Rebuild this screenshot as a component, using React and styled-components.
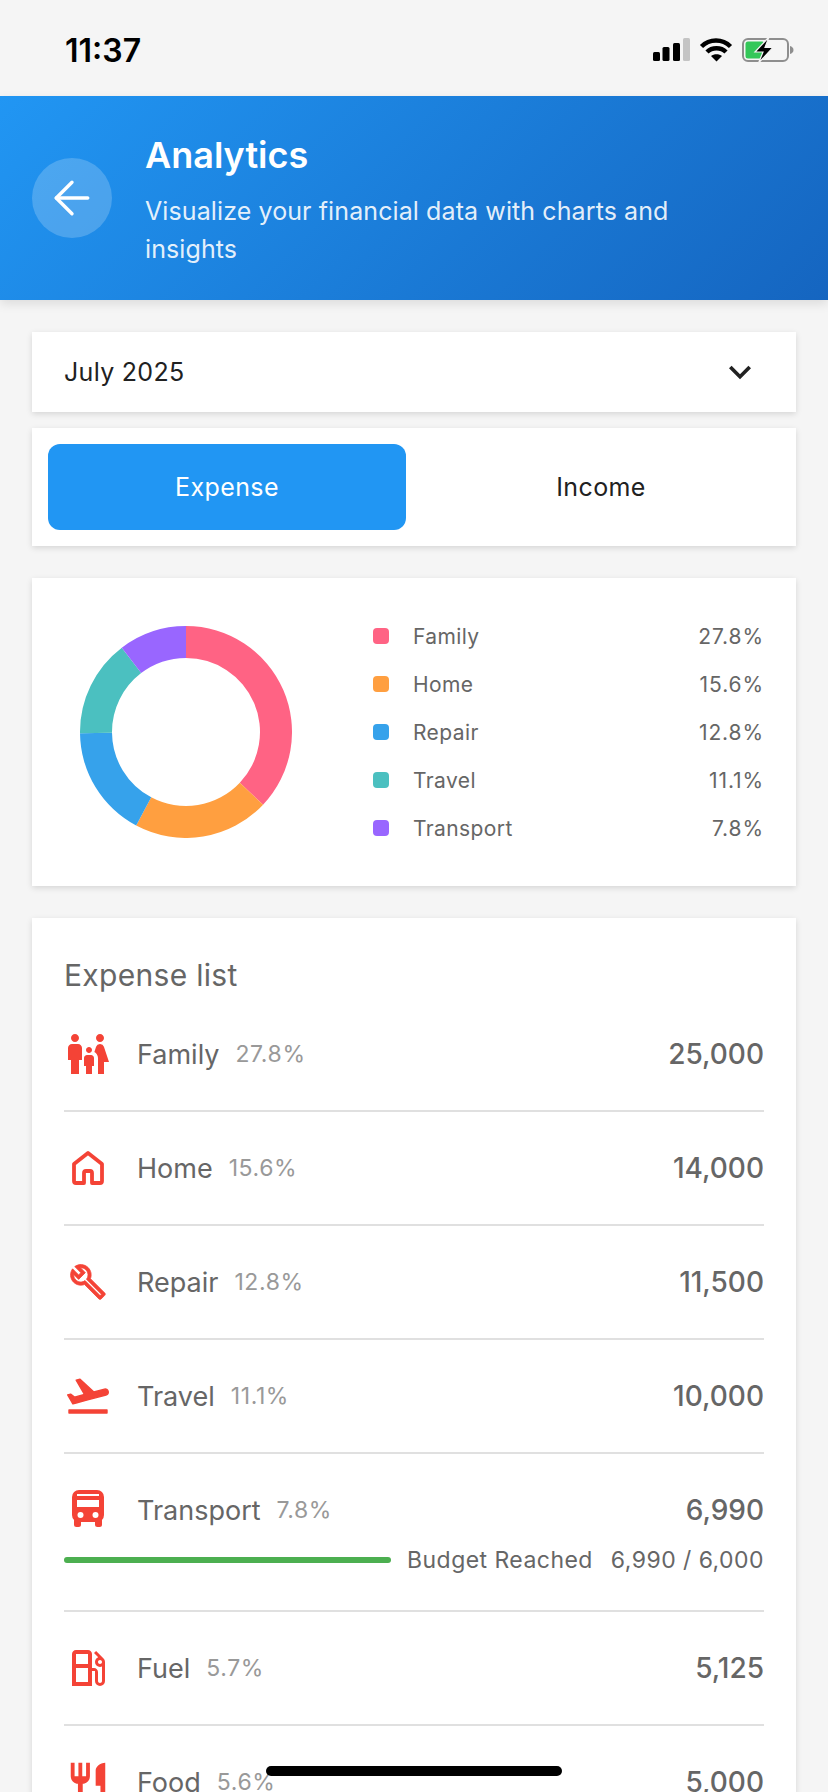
import styled, { createGlobalStyle } from "styled-components";
import { ArrowLeft } from "lucide-react";
import {
  MdFamilyRestroom,
  MdOutlineLocalGasStation,
  MdRestaurant,
  MdKeyboardArrowDown,
} from "react-icons/md";

const GlobalStyle = createGlobalStyle`
  html, body {
    margin: 0;
    padding: 0;
    background: #f5f5f5;
    font-family: Inter, "Liberation Sans", sans-serif;
  }
  * { box-sizing: border-box; }
`;

const Screen = styled.div`
  position: relative;
  width: 828px;
  height: 1792px;
  overflow: hidden;
  background: #f5f5f5;
`;

const StatusBar = styled.div`
  height: 96px;
  padding: 4px 32px 0 65px;
  display: flex;
  align-items: center;
  justify-content: space-between;
`;

const Clock = styled.span`
  font-size: 32px;
  font-weight: 600;
  color: #000;
`;

const Header = styled.header`
  height: 204px;
  padding: 5px 32px 0;
  display: flex;
  align-items: center;
  gap: 33px;
  background: linear-gradient(135deg, #2196f3, #1565c0);
  box-shadow: 0 4px 10px rgba(0, 0, 0, 0.1);
`;

const BackButton = styled.div`
  width: 80px;
  height: 80px;
  flex: none;
  margin-top: -5px;
  border-radius: 50%;
  display: flex;
  align-items: center;
  justify-content: center;
  color: #fff;
  background: rgba(255, 255, 255, 0.2);
`;

const HeaderText = styled.div`
  width: 560px;
`;

const Title = styled.h1`
  margin: 0 0 15px;
  font-size: 36px;
  line-height: 44px;
  font-weight: 600;
  color: #fff;
`;

const Subtitle = styled.p`
  margin: 0;
  font-size: 25px;
  line-height: 38px;
  letter-spacing: 0.1px;
  color: rgba(255, 255, 255, 0.9);
`;

const Content = styled.main`
  padding: 32px 32px 0;
  display: flex;
  flex-direction: column;
`;

const Card = styled.section`
  background: #fff;
  box-shadow: 0 2px 6px rgba(0, 0, 0, 0.13);
  margin-bottom: ${(props) => props.$gap || 32}px;
`;

const MonthSelect = styled(Card)`
  height: 80px;
  padding: 0 34px 0 32px;
  display: flex;
  align-items: center;
  justify-content: space-between;
  font-size: 25px;
  letter-spacing: 0.3px;
  color: #212121;
`;

const Tabs = styled(Card)`
  height: 118px;
  padding: 16px;
  display: grid;
  grid-template-columns: 1fr 1fr;
  gap: 16px;
`;

const Tab = styled.div`
  display: flex;
  align-items: center;
  justify-content: center;
  border-radius: 12px;
  font-size: 25px;
  letter-spacing: 0.4px;
  color: ${(props) => (props.$active ? "#fff" : "#212121")};
  background: ${(props) => (props.$active ? "#2196f3" : "transparent")};
`;

const ChartCard = styled(Card)`
  height: 308px;
  padding: 0 32px 0 48px;
  display: flex;
  align-items: center;
  gap: 81px;
`;

const Legend = styled.ul`
  flex: 1;
  margin: 0;
  padding: 0;
  list-style: none;
  display: flex;
  flex-direction: column;
  gap: 22px;
`;

const LegendRow = styled.li`
  height: 26px;
  display: flex;
  align-items: center;
  font-size: 21px;
  letter-spacing: 0.4px;
  color: #666;
`;

const LegendDot = styled.span`
  width: 16px;
  height: 16px;
  margin-right: 24px;
  border-radius: 4px;
  background: ${(props) => props.$color};
`;

const LegendValue = styled.span`
  margin-left: auto;
  letter-spacing: 0.9px;
`;

const ListCard = styled(Card)`
  padding: 36px 32px 0;
`;

const ListTitle = styled.h2`
  margin: 0 0 2px;
  font-size: 30px;
  line-height: 42px;
  font-weight: 400;
  letter-spacing: 0.3px;
  color: #666;
`;

const Row = styled.div`
  border-bottom: 2px solid #e0e0e0;
  padding: ${(props) => (props.$budget ? "28px 0 36px" : "0")};
  display: flex;
  flex-direction: column;
  justify-content: center;
  min-height: 114px;
`;

const RowMain = styled.div`
  display: flex;
  align-items: center;
  height: 56px;
`;

const IconSlot = styled.div`
  width: 73px;
  flex: none;
  display: flex;
  align-items: center;
  color: #f44336;
`;

const IconBox = styled.div`
  width: 48px;
  height: 56px;
  display: flex;
  align-items: center;
  justify-content: center;
`;

const RowName = styled.span`
  font-size: 27px;
  color: #666;
`;

const RowPercent = styled.span`
  margin-left: 16px;
  font-size: 23px;
  letter-spacing: 0.6px;
  color: #999;
`;

const RowAmount = styled.span`
  margin-left: auto;
  font-size: 28px;
  font-weight: 500;
  color: #666;
`;

const BudgetRow = styled.div`
  margin-top: 8px;
  height: 28px;
  display: flex;
  align-items: center;
  gap: 16px;
  font-size: 23px;
  letter-spacing: 0.45px;
  color: #666;
`;

const BudgetBar = styled.div`
  flex: 1;
  height: 6px;
  border-radius: 3px;
  background: #4caf50;
`;

const BudgetNote = styled.span`
  margin-right: 2px;
`;

const HomeIndicator = styled.div`
  position: absolute;
  left: 266px;
  bottom: 16px;
  width: 296px;
  height: 10px;
  border-radius: 5px;
  background: #000;
`;

const StatusIcons = () => (
  <svg width="143" height="28" viewBox="0 0 143 28">
    <rect x="0" y="16" width="7" height="9" rx="1.500" fill="#000" />
    <rect x="9.500" y="11" width="7" height="14" rx="1.500" fill="#000" />
    <rect x="20" y="7" width="7" height="18" rx="1.500" fill="#000" />
    <rect x="30" y="2" width="7" height="23" rx="1.500" fill="#c4c4c4" />
    <path d="M48.500 10.500C56.500 2.500 69.500 2.500 77.500 10.500" fill="none" stroke="#000" strokeWidth="4.500" />
    <path d="M54 16C59 11 68 11 73 16" fill="none" stroke="#000" strokeWidth="4.500" />
    <path d="M58 20L63.500 25.500L69 20C66 17.500 61 17.500 58 20Z" fill="#000" />
    <rect x="90" y="3" width="45" height="22" rx="5" fill="none" stroke="#8e8e8e" strokeWidth="2" />
    <rect x="92.500" y="5.500" width="19" height="17" rx="2.500" fill="#34c759" />
    <path d="M137 10c2 .6 3.500 2 3.500 4s-1.500 3.400-3.500 4z" fill="#8e8e8e" />
    <path d="M116 1L102 16H110L105.500 27L120 11.500H112Z" fill="#000" stroke="#f5f5f5" strokeWidth="1.200" />
  </svg>
);

// 도넛 차트 조각
const slices = [
  { color: "#ff6384", value: 25000 },
  { color: "#ff9f40", value: 14000 },
  { color: "#36a2eb", value: 11500 },
  { color: "#4bc0c0", value: 10000 },
  { color: "#9966ff", value: 6990 },
];

const polar = (radius, angle) => {
  const rad = (angle * Math.PI) / 180;
  return [106 + radius * Math.sin(rad), 106 - radius * Math.cos(rad)];
};

const slicePath = (from, to) => {
  const [x1, y1] = polar(106, from);
  const [x2, y2] = polar(106, to);
  const [x3, y3] = polar(74, to);
  const [x4, y4] = polar(74, from);
  const large = to - from > 180 ? 1 : 0;
  return `M${x1} ${y1}A106 106 0 ${large} 1 ${x2} ${y2}L${x3} ${y3}A74 74 0 ${large} 0 ${x4} ${y4}Z`;
};

const Donut = () => {
  const total = slices.reduce((sum, s) => sum + s.value, 0);
  let angle = 0;
  return (
    <svg width="212" height="212" viewBox="0 0 212 212" style={{ flex: "none" }}>
      {slices.map((s) => {
        const from = angle;
        angle += (s.value / total) * 360;
        return <path key={s.color} d={slicePath(from, angle)} fill={s.color} />;
      })}
    </svg>
  );
};

const HomeIcon = () => (
  <svg width="48" height="48" viewBox="0 0 48 48" fill="none" stroke="currentColor" strokeWidth="3.800" strokeLinejoin="round">
    <path d="M10 20L24 9L38 20V37a2 2 0 0 1-2 2H28V29a2 2 0 0 0-2-2H22a2 2 0 0 0-2 2V39H12a2 2 0 0 1-2-2Z" />
  </svg>
);

const BusIcon = () => (
  <svg width="48" height="56" viewBox="0 0 48 56">
    <rect x="8" y="8" width="32" height="32" rx="7" fill="currentColor" />
    <rect x="10" y="36" width="7" height="9" rx="2.500" fill="currentColor" />
    <rect x="31" y="36" width="7" height="9" rx="2.500" fill="currentColor" />
    <rect x="13" y="12" width="22" height="2" fill="#fff" />
    <rect x="13" y="18" width="22" height="7" fill="#fff" />
    <circle cx="16.500" cy="33" r="3" fill="#fff" />
    <circle cx="31.500" cy="33" r="3" fill="#fff" />
  </svg>
);

// 아이콘 패키지 것은 선이 얇아서 stroke 추가
const WrenchIcon = () => (
  <svg width="38" height="38" viewBox="0 0 24 24" fill="currentColor" stroke="currentColor" strokeWidth="0.5" strokeLinejoin="round">
    <path d="M22.610 18.990l-9.080-9.080c.93-2.340.45-5.100-1.440-7C9.790.61 6.210.4 3.660 2.260L7.500 6.110 6.080 7.520 2.250 3.690C.39 6.230.6 9.820 2.900 12.110c1.860 1.860 4.570 2.350 6.880 1.480l9.110 9.110c.39.39 1.020.39 1.410 0l2.300-2.300c.4-.38.4-1.010.01-1.410zm-3 1.600l-9.460-9.460c-.61.45-1.290.72-2 .82-1.360.2-2.790-.21-3.830-1.250C3.370 9.760 2.930 8.500 3 7.260l3.090 3.090 4.240-4.240-3.090-3.090c1.240-.07 2.490.37 3.440 1.310 1.080 1.080 1.490 2.570 1.240 3.960-.12.71-.42 1.370-.88 1.960l9.450 9.450-.88.880z" />
  </svg>
);

const PlaneIcon = () => (
  <svg width="48" height="48" viewBox="0 0 24 24" fill="currentColor" stroke="currentColor" strokeWidth="0.7" strokeLinejoin="round">
    <path d="M2.500 19h19v1.500h-19z" />
    <path d="M22.070 9.640c-.21-.8-1.040-1.280-1.840-1.060L14.920 10l-6.900-6.430-1.930.51 4.140 7.170-4.970 1.330-1.970-1.540-1.450.39 1.820 3.160.77 1.330 1.600-.43 5.310-1.420 4.350-1.160L21 11.490c.81-.23 1.280-1.050 1.070-1.850z" />
  </svg>
);

const legend = [
  { name: "Family", value: "27.8%", color: "#ff6384" },
  { name: "Home", value: "15.6%", color: "#ff9f40" },
  { name: "Repair", value: "12.8%", color: "#36a2eb" },
  { name: "Travel", value: "11.1%", color: "#4bc0c0" },
  { name: "Transport", value: "7.8%", color: "#9966ff" },
];

const rows = [
  { name: "Family", percent: "27.8%", amount: "25,000", icon: <MdFamilyRestroom size={52} /> },
  { name: "Home", percent: "15.6%", amount: "14,000", icon: <HomeIcon /> },
  { name: "Repair", percent: "12.8%", amount: "11,500", icon: <WrenchIcon /> },
  { name: "Travel", percent: "11.1%", amount: "10,000", icon: <PlaneIcon /> },
  {
    name: "Transport",
    percent: "7.8%",
    amount: "6,990",
    icon: <BusIcon />,
    budget: "6,990 / 6,000",
  },
  { name: "Fuel", percent: "5.7%", amount: "5,125", icon: <MdOutlineLocalGasStation size={48} /> },
  { name: "Food", percent: "5.6%", amount: "5,000", icon: <MdRestaurant size={46} /> },
];

function App() {
  return (
    <Screen>
      <GlobalStyle />
      <StatusBar>
        <Clock>11:37</Clock>
        <StatusIcons />
      </StatusBar>
      <Header>
        <BackButton>
          <ArrowLeft size={54} strokeWidth={1.500} />
        </BackButton>
        <HeaderText>
          <Title>Analytics</Title>
          <Subtitle>Visualize your financial data with charts and insights</Subtitle>
        </HeaderText>
      </Header>
      <Content>
        <MonthSelect $gap={16}>
          July 2025
          <MdKeyboardArrowDown size={44} color="#212121" />
        </MonthSelect>
        <Tabs>
          <Tab $active>Expense</Tab>
          <Tab>Income</Tab>
        </Tabs>
        <ChartCard>
          <Donut />
          <Legend>
            {legend.map((item) => (
              <LegendRow key={item.name}>
                <LegendDot $color={item.color} />
                {item.name}
                <LegendValue>{item.value}</LegendValue>
              </LegendRow>
            ))}
          </Legend>
        </ChartCard>
        <ListCard>
          <ListTitle>Expense list</ListTitle>
          {rows.map((row) => (
            <Row key={row.name} $budget={!!row.budget}>
              <RowMain>
                <IconSlot>
                  <IconBox>{row.icon}</IconBox>
                </IconSlot>
                <RowName>{row.name}</RowName>
                <RowPercent>{row.percent}</RowPercent>
                <RowAmount>{row.amount}</RowAmount>
              </RowMain>
              {row.budget && (
                <BudgetRow>
                  <BudgetBar />
                  <BudgetNote>Budget Reached</BudgetNote>
                  <span>{row.budget}</span>
                </BudgetRow>
              )}
            </Row>
          ))}
        </ListCard>
      </Content>
      <HomeIndicator />
    </Screen>
  );
}

export default App;
